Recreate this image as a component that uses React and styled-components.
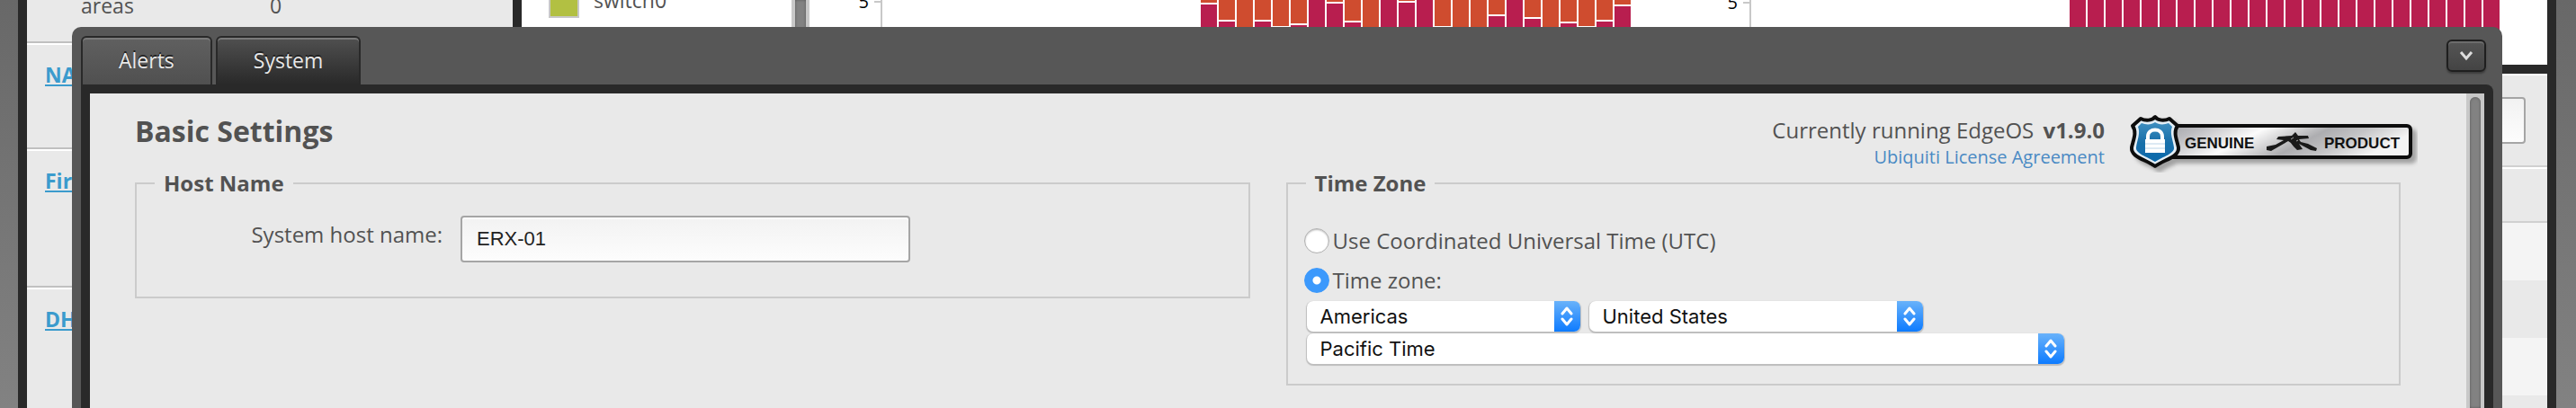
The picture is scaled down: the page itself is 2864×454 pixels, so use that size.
import React, { useState } from 'react'
import styled, { createGlobalStyle } from 'styled-components'

const RED = '#b81e4f'
const ORANGE = '#cf4c2f'

// y where the orange part of each bar stops and the red one starts
const leftSplits = [4, 23, 40, 23, 30, 27, 0, 3, 24, 40, 0, 2, 0, 30, 40, 40, 17, 0, 20, 40, 25, 30, 23, 6]
const rightSplits = Array(24).fill(0)

const BarChart = ({ splits, tickY }) => (
  <Chart aria-hidden="true">
    <text x="66" y={tickY + 7} textAnchor="end" fontSize="20" fill="#000">
      5
    </text>
    <path d={`M72 ${tickY}H80M80 0V72`} stroke="#c8c8c8" strokeWidth="2" fill="none" />
    {splits.map((split, i) => (
      <g key={i}>
        {split > 0 && <rect x={435 + i * 20} y="0" width="18" height={split - 1} fill={ORANGE} />}
        <rect x={435 + i * 20} y={split ? split + 1 : 0} width="18" height={72 - split} fill={RED} />
      </g>
    ))}
  </Chart>
)

const Select = ({ label, width, options }) => (
  <SelectBox $width={width}>
    <select aria-label={label}>
      {options.map(option => (
        <option key={option}>{option}</option>
      ))}
    </select>
    <Stepper>
      <svg width="16" height="22" viewBox="0 0 16 22" fill="none" stroke="#fff" strokeWidth="3" strokeLinecap="round" strokeLinejoin="round">
        <path d="M3 8L8 2L13 8M3 14L8 20L13 14" />
      </svg>
    </Stepper>
  </SelectBox>
)

const GenuineBadge = () => (
  <Badge width="320" height="64" viewBox="0 0 320 64" role="img" aria-label="Genuine product">
    <defs>
      <linearGradient id="metal" x1="0" y1="0" x2="1" y2="0.25">
        <stop offset="0" stopColor="#a3a3a7" />
        <stop offset="0.15" stopColor="#bcbcc0" />
        <stop offset="0.4" stopColor="#fbfbfb" />
        <stop offset="0.65" stopColor="#adadb0" />
        <stop offset="0.8" stopColor="#c4c4c6" />
        <stop offset="1" stopColor="#f4f4f4" />
      </linearGradient>
      <linearGradient id="shield" x1="0" y1="0" x2="0" y2="1">
        <stop offset="0" stopColor="#3f8fc0" />
        <stop offset="0.5" stopColor="#1a70aa" />
        <stop offset="1" stopColor="#0c69ab" />
      </linearGradient>
      <filter id="drop" x="-10%" y="-10%" width="120%" height="130%">
        <feDropShadow dx="5" dy="5" stdDeviation="2" floodOpacity="0.3" />
      </filter>
    </defs>
    <g filter="url(#drop)">
      <rect x="40" y="12" width="272" height="35" rx="4" fill="url(#metal)" stroke="#111" strokeWidth="4" />
      <path
        d="M28 2C25 6 18 7 12 4L3 12C8 19 4 27 2 36C1 47 17 49 28 57C39 49 55 47 54 36C52 27 48 19 53 12L44 4C38 7 31 6 28 2Z"
        fill="#e4eef5"
        stroke="#0c0c0c"
        strokeWidth="4"
        strokeLinejoin="round"
      />
      <path
        d="M28 8C24 11 18 11 13 9L9 13C12 20 8 28 7 36C6 43 19 46 28 52C37 46 50 43 49 36C48 28 44 20 47 13L43 9C38 11 32 11 28 8Z"
        fill="url(#shield)"
      />
    </g>
    <path d="M20 28V24C20 14 36 14 36 24V28" fill="none" stroke="#fff" strokeWidth="4" />
    <path d="M17 27H39V42H17Z" fill="#fff" />
    <path d="M17 32H39M17 37H39" stroke="#b9d4e8" strokeWidth="1" />
    <text x="61" y="37">GENUINE</text>
    <text x="216" y="37">PRODUCT</text>
    <g fill="#1a1a1a">
      <path d="M152 35L162 33L171 28L163 27L165 24L180 23L184 19L187 23L198 23L199 26L188 27L190 30L198 32L208 37L207 40L201 39L188 32L192 38L186 39L182 35L179 31L176 29L157 40L152 39Z" />
    </g>
    <path d="M176 25L182 33M184 20V33M190 24L181 29" stroke="#1a1a1a" strokeWidth="2" />
    <path d="M182 25L179 27M187 28L185 29" stroke="#a5a5a5" strokeWidth="1" />
  </Badge>
)

export default () => {
  const [tab, setTab] = useState('System')
  const [zone, setZone] = useState('local')
  const [host, setHost] = useState('ERX-01')

  return (
    <Page>
      <GlobalStyle />
      <Dashboard>
        <Sidebar>
          <Stat>
            <span>areas</span>
            <span>0</span>
          </Stat>
          <Service $height={118}>
            <a href="#nat">NAT</a>
          </Service>
          <Service $height={154}>
            <a href="#firewall">Firewall</a>
          </Service>
          <Service $height={154}>
            <a href="#dhcp">DHCP</a>
          </Service>
        </Sidebar>
        <Main>
          <Traffic>
            <Legend>
              <Swatch />
              <span>switch0</span>
            </Legend>
            <Track>
              <Thumb />
            </Track>
            <BarChart splits={leftSplits} tickY={2} />
            <BarChart splits={rightSplits} tickY={3} />
          </Traffic>
          <Interfaces>
            <Toolbar>
              <Search type="text" aria-label="Search" />
            </Toolbar>
            <HeadRow />
            <Row $light />
            <Row />
            <Row $light />
            <Row />
          </Interfaces>
        </Main>
      </Dashboard>

      <Panel>
        <PanelHeader>
          {['Alerts', 'System'].map(name => (
            <Tab key={name} type="button" $active={tab === name} onClick={() => setTab(name)}>
              {name}
            </Tab>
          ))}
          <Collapse type="button" aria-label="Collapse">
            <svg width="16" height="12" viewBox="0 0 16 12" fill="none" stroke="#ddd" strokeWidth="3">
              <path d="M2 2L8 9L14 2" />
            </svg>
          </Collapse>
        </PanelHeader>
        <PanelBody>
          <Settings>
            <Heading>
              <h1>Basic Settings</h1>
              <Version>
                <p>
                  Currently running EdgeOS <b>v1.9.0</b>
                </p>
                <a href="#license">Ubiquiti License Agreement</a>
              </Version>
              <GenuineBadge />
            </Heading>
            <Columns>
              <Group>
                <legend>Host Name</legend>
                <Field>
                  <label htmlFor="host">System host name:</label>
                  <input id="host" type="text" value={host} onChange={e => setHost(e.target.value)} />
                </Field>
              </Group>
              <Group>
                <legend>Time Zone</legend>
                <Choices>
                  <Choice>
                    <input type="radio" name="zone" checked={zone === 'utc'} onChange={() => setZone('utc')} />
                    Use Coordinated Universal Time (UTC)
                  </Choice>
                  <Choice>
                    <input type="radio" name="zone" checked={zone === 'local'} onChange={() => setZone('local')} />
                    Time zone:
                  </Choice>
                </Choices>
                <Selects>
                  <Select label="Region" width={304} options={['Americas']} />
                  <Select label="Country" width={371} options={['United States']} />
                  <Select label="Zone" width={842} options={['Pacific Time']} />
                </Selects>
              </Group>
            </Columns>
          </Settings>
          <Track $rounded>
            <Thumb $rounded />
          </Track>
        </PanelBody>
      </Panel>
    </Page>
  )
}

const GlobalStyle = createGlobalStyle`
  * {
    box-sizing: border-box;
  }

  body {
    margin: 0;
    color: #525252;
    font-family: 'Open Sans', sans-serif;
    font-size: 24px;
    line-height: 28px;
  }

  h1,
  p {
    margin: 0;
  }

  input,
  select,
  button {
    margin: 0;
    font: inherit;
  }
`

const Page = styled.div`
  position: relative;
  height: 100vh;
  min-height: 454px;
  overflow: hidden;
  padding: 0 22px 0 20px;
  background: linear-gradient(#686868, #828282);
`

const Dashboard = styled.div`
  display: flex;
  height: 100%;
  border: solid #292929;
  border-width: 0 10px;
  background: #e9e9e9;
`

const Sidebar = styled.div`
  flex: none;
  width: 550px;
  border-right: 10px solid #292929;
`

const Stat = styled.div`
  display: grid;
  grid-template-columns: 210px 1fr;
  height: 54px;
  margin-top: -8px;
  padding-left: 60px;
  font-size: 23px;
`

const Service = styled.div`
  height: ${({ $height }) => $height}px;
  padding: 21px 20px;
  border-top: 2px solid #c0c0c0;
  box-shadow: inset 0 2px #fff;

  a {
    color: #3b9bcd;
    font-size: 23px;
    font-weight: 700;
    text-underline-offset: 2px;
  }
`

const Main = styled.div`
  flex: 1;
  min-width: 0;
`

const Traffic = styled.div`
  display: flex;
  height: 82px;
  overflow: hidden;
  background: #fff;
  border-bottom: 10px solid #292929;
`

const Legend = styled.div`
  display: flex;
  flex: none;
  gap: 16px;
  width: 300px;
  margin-top: -14px;
  padding-left: 30px;
  font-size: 23px;
`

const Swatch = styled.span`
  width: 34px;
  height: 34px;
  border: 2px solid #c8c8c8;
  background: #b2c042;
`

const Track = styled.div`
  flex: none;
  width: 20px;
  padding: ${({ $rounded }) => ($rounded ? '4px 4px 0' : '0 4px')};
  background: #c8c8c8;
`

const Thumb = styled.div`
  height: 100%;
  border-radius: ${({ $rounded }) => ($rounded ? '6px 6px 0 0' : 0)};
  background: #828282;
  box-shadow: inset 0 0 3px #555;
`

const Chart = styled.svg`
  flex: 1;
  min-width: 0;
  height: 72px;
`

const Interfaces = styled.div`
  border-top: 2px solid #fff;
`

const Toolbar = styled.div`
  display: flex;
  justify-content: flex-end;
  height: 102px;
  padding: 24px 24px 0;
  border-bottom: 2px solid #d0d0d0;
`

const Search = styled.input`
  width: 300px;
  height: 52px;
  border: 2px solid #a5a5a5;
  border-radius: 4px;
  background: linear-gradient(#f2f2f2, #fdfdfd);
`

const HeadRow = styled.div`
  height: 62px;
  border-top: 2px solid #fff;
  border-bottom: 2px solid #d0d0d0;
`

const Row = styled.div`
  height: 64px;
  background: ${({ $light }) => ($light ? '#f4f4f4' : '#e9e9e9')};
`

const Panel = styled.div`
  position: absolute;
  top: 30px;
  right: 82px;
  bottom: 0;
  left: 80px;
  display: flex;
  flex-direction: column;
  padding: 0 10px;
  border-radius: 10px 10px 0 0;
  background: #575757;
`

const PanelHeader = styled.div`
  display: flex;
  align-items: flex-end;
  gap: 4px;
  height: 64px;
`

const Tab = styled.button`
  height: 54px;
  padding: 0 40px 2px;
  border: 2px solid #292929;
  border-bottom: 0;
  border-radius: 6px 6px 0 0;
  color: #e8e8e8;
  font-size: 23px;
  text-shadow: 0 -2px #222;
  background: ${({ $active }) =>
    $active ? 'linear-gradient(#505050, #292929)' : 'linear-gradient(#606060, #505050)'};
  box-shadow: inset 0 2px #7a7a7a;
`

const Collapse = styled.button`
  display: flex;
  align-items: center;
  justify-content: center;
  width: 44px;
  height: 36px;
  margin: 0 8px 14px auto;
  padding: 0;
  border: 2px solid #1f1f1f;
  border-radius: 6px;
  background: linear-gradient(#555, #444);
  box-shadow: inset 0 2px #6c6c6c, 0 2px 2px rgba(0, 0, 0, 0.3);
`

const PanelBody = styled.div`
  display: flex;
  flex: 1;
  padding: 10px 10px 0;
  border-radius: 0 8px 0 0;
  background: #292929;
`

const Settings = styled.div`
  flex: 1;
  min-width: 0;
  padding: 0 54px 0 50px;
  background: #e9e9e9;
`

const Heading = styled.div`
  display: flex;
  align-items: flex-start;
  height: 86px;
  padding-top: 24px;

  h1 {
    margin-right: auto;
    font-size: 32px;
    line-height: 36px;
  }
`

const Version = styled.div`
  margin: 3px 28px 0 0;
  text-align: right;

  b {
    margin-left: 4px;
  }

  a {
    display: block;
    color: #4a8ac4;
    font-size: 20px;
    line-height: 32px;
    text-decoration: none;
  }
`

const Badge = styled.svg`
  flex: none;

  text {
    fill: #111;
    font: 700 17px 'Liberation Sans', sans-serif;
  }
`

const Columns = styled.div`
  display: grid;
  grid-template-columns: 1fr 1fr;
  align-items: start;
  gap: 40px;
  margin-right: 19px;
`

const Group = styled.fieldset`
  min-width: 0;
  margin: 0;
  padding: 22px 20px;
  border: 2px solid #cbcbcb;

  legend {
    padding: 0 10px;
    font-weight: 700;
  }
`

const Field = styled.div`
  display: flex;
  gap: 20px;
  padding-bottom: 16px;

  label {
    flex: none;
    width: 320px;
    line-height: 42px;
    text-align: right;
  }

  input {
    width: 500px;
    height: 52px;
    padding: 0 16px;
    border: 2px solid #a5a5a5;
    border-radius: 4px;
    color: #222;
    font-family: 'Liberation Sans', sans-serif;
    font-size: 22px;
    background: linear-gradient(#f2f2f2, #fdfdfd);
    box-shadow: inset 0 2px #fff;
  }
`

const Choices = styled.div`
  margin-left: -2px;
  padding-top: 6px;
`

const Choice = styled.label`
  display: flex;
  align-items: center;
  gap: 4px;
  height: 44px;

  input {
    appearance: none;
    width: 28px;
    height: 28px;
    border: 1px solid #b0b0b0;
    border-radius: 50%;
    background: #fff;
    box-shadow: inset 0 1px 2px #bbb;
  }

  input:checked {
    border-color: #3c99fc;
    background: radial-gradient(circle, #fff 4px, #3c99fc 5px);
    box-shadow: none;
  }
`

const Selects = styled.div`
  display: flex;
  flex-wrap: wrap;
  gap: 2px 10px;
  max-width: 860px;
  padding: 1px 0 0 1px;
`

const SelectBox = styled.span`
  position: relative;
  width: ${({ $width }) => $width}px;
  height: 34px;

  select {
    width: 100%;
    height: 100%;
    padding: 0 44px 0 15px;
    appearance: none;
    border: 0;
    border-radius: 7px;
    color: #111;
    font-family: Inter, sans-serif;
    font-size: 22px;
    line-height: 34px;
    background: #fff;
    box-shadow: 0 1px 1px 1px #bdbdbd;
  }
`

const Stepper = styled.span`
  position: absolute;
  top: 0;
  right: 0;
  bottom: 0;
  display: flex;
  align-items: center;
  justify-content: center;
  width: 29px;
  border-radius: 0 7px 7px 0;
  background: linear-gradient(#69b2fa, #0d7bff);
  pointer-events: none;
`
